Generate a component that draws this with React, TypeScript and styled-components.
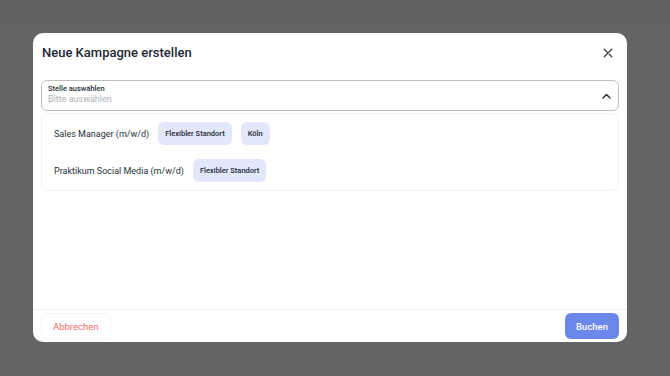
import React, { useState } from "react";
import styled, { createGlobalStyle } from "styled-components";

const GlobalStyle = createGlobalStyle`
  html, body {
    margin: 0;
    padding: 0;
    background: #636466;
    font-family: Roboto, Lato, sans-serif;
  }
  * { box-sizing: border-box; }
`;

type Job = { title: string; tags: string[] };

const jobs: Job[] = [
  { title: "Sales Manager (m/w/d)", tags: ["Flexibler Standort", "Köln"] },
  { title: "Praktikum Social Media (m/w/d)", tags: ["Flexibler Standort"] },
];

function App() {
  const [value, setValue] = useState("");

  return (
    <>
      <GlobalStyle />
      <Backdrop>
        <TopBand />
        <Modal>
          <Header>
            <Title>Neue Kampagne erstellen</Title>
            <CloseButton aria-label="close">
              <svg width="10" height="10" viewBox="0 0 10 10">
                <path d="M1.2 1.2 L8.8 8.8 M8.8 1.2 L1.2 8.8" stroke="#3a4048" strokeWidth="1.3" strokeLinecap="round" />
              </svg>
            </CloseButton>
          </Header>

          <Body>
            <SelectBox>
              <SelectText>
                <SelectLabel>Stelle auswählen</SelectLabel>
                <SelectInput
                  autoFocus
                  placeholder="Bitte auswählen"
                  value={value}
                  onChange={(e: any) => setValue(e.target.value)}
                />
              </SelectText>
              <svg width="9" height="6" viewBox="0 0 9 6">
                <path d="M1 5 L4.5 1.5 L8 5" stroke="#2f353c" strokeWidth="1.5" fill="none" strokeLinecap="round" strokeLinejoin="round" />
              </svg>
            </SelectBox>

            <Dropdown>
              {jobs.map((job) => (
                <Option key={job.title}>
                  <OptionTitle>{job.title}</OptionTitle>
                  {job.tags.map((t) => (
                    <Tag key={t}>{t}</Tag>
                  ))}
                </Option>
              ))}
            </Dropdown>
          </Body>

          <Footer>
            <CancelButton>Abbrechen</CancelButton>
            <PrimaryButton>Buchen</PrimaryButton>
          </Footer>
        </Modal>
      </Backdrop>
    </>
  );
}

const Backdrop = styled.div`
  position: relative;
  width: 670px;
  height: 376px;
  padding: 33px 43px 34px 33px;
  background: #636466;
  overflow: hidden;
`;

const TopBand = styled.div`
  position: absolute;
  left: 0;
  top: 0;
  width: 100%;
  height: 24px;
  background: #606163;
`;

const Modal = styled.div`
  position: relative;
  height: 309px;
  width: 594px;
  background: #fff;
  border-radius: 10px;
  display: flex;
  flex-direction: column;
  overflow: hidden;
`;

const Header = styled.div`
  display: flex;
  align-items: center;
  justify-content: space-between;
  padding: 0 14px 0 9px;
  height: 39px;
`;

const Title = styled.h2`
  margin: 0;
  font-size: 13px;
  font-weight: 500;
  color: #1e2834;
`;

const CloseButton = styled.button`
  border: none;
  background: none;
  padding: 0;
  display: flex;
  cursor: pointer;
`;

const Body = styled.div`
  flex: 1;
  padding: 8px 8px 0 8px;
  display: flex;
  flex-direction: column;
  gap: 2px;
`;

const SelectBox = styled.div`
  height: 31px;
  border: 1px solid #b9bec4;
  border-radius: 6px;
  display: flex;
  align-items: center;
  justify-content: space-between;
  padding: 0 7px 0 6px;
`;

const SelectText = styled.div`
  display: flex;
  flex-direction: column;
  align-self: flex-start;
  padding-top: 3px;
`;

const SelectLabel = styled.span`
  font-size: 7.5px;
  line-height: 9px;
  font-weight: 500;
  color: #28313b;
`;

const SelectInput = styled.input`
  border: none;
  outline: none;
  padding: 0;
  height: 12px;
  font-family: inherit;
  font-size: 9px;
  color: #28313b;
  caret-color: #28313b;
  background: transparent;

  &::placeholder {
    color: #aeb2b8;
  }
`;

const Dropdown = styled.div`
  border: 1px solid #f0f1f3;
  border-radius: 8px;
  padding: 8px 12px 8px 12px;
  display: flex;
  flex-direction: column;
  gap: 14px;
`;

const Option = styled.div`
  display: flex;
  align-items: center;
  gap: 9px;
`;

const OptionTitle = styled.span`
  font-size: 9px;
  color: #2a323b;
`;

const Tag = styled.span`
  height: 23px;
  padding: 0 7px;
  display: inline-flex;
  align-items: center;
  background: #e2e7fb;
  border-radius: 6px;
  font-size: 7.5px;
  font-weight: 500;
  color: #1f2733;
`;

const Footer = styled.div`
  height: 33px;
  border-top: 1px solid #eeeff1;
  display: flex;
  align-items: center;
  justify-content: space-between;
  padding: 0 8px;
`;

const CancelButton = styled.button`
  height: 26px;
  padding: 0 11px;
  background: #fff;
  border: 1px solid #f2f3f4;
  border-radius: 6px;
  font-family: inherit;
  font-size: 9.5px;
  color: #f06c6c;
  cursor: pointer;
`;

const PrimaryButton = styled.button`
  height: 26px;
  padding: 0 11px;
  background: #6c87ec;
  border: none;
  border-radius: 6px;
  font-family: inherit;
  font-size: 9.5px;
  font-weight: 500;
  color: #fff;
  cursor: pointer;
`;

export default App;
